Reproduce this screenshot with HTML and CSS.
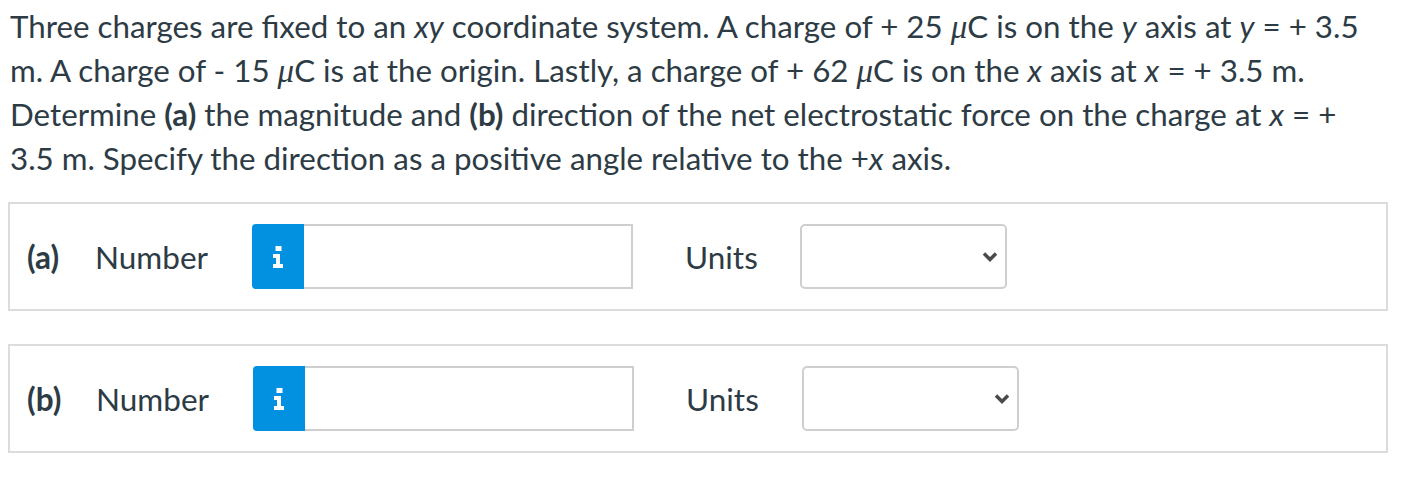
FILE: index.html
```html
<!DOCTYPE html>
<html lang="en">
<head>
<meta charset="utf-8">
<link rel="stylesheet" href="styles.css">
</head>
<body>
<div class="question">
  <p class="prompt">Three charges are fixed to an <i>xy</i> coordinate system. A charge of + 25 <span class="mu">μ</span>C is on the <i>y</i> axis at <i>y</i> = + 3.5 m. A charge of - 15 <span class="mu">μ</span>C is at the origin. Lastly, a charge of + 62 <span class="mu">μ</span>C is on the <i>x</i> axis at <i>x</i> = + 3.5 m. Determine <b>(a)</b> the magnitude and <b>(b)</b> direction of the net electrostatic force on the charge at <i>x</i> = + 3.5 m. Specify the direction as a positive angle relative to the +<i>x</i> axis.</p>

  <div class="part">
    <span class="part-label">(a)</span>
    <span class="field-label">Number</span>
    <div class="input-group">
      <span class="info-btn"><svg width="10" height="22" viewBox="0 0 10 22"><rect x="2.5" y="0" width="6" height="5" fill="#fff"/><path d="M0 8h7v10h3v4H0v-4h3v-6H0z" fill="#fff"/></svg></span>
      <span class="num-input"></span>
    </div>
    <span class="units-label">Units</span>
    <span class="select"><svg class="chev" width="16" height="11" viewBox="0 0 16 11"><path d="M2 2.5 8 8.5 14 2.5" fill="none" stroke="#4a4a4a" stroke-width="3.5"/></svg></span>
  </div>

  <div class="part part-b">
    <span class="part-label">(b)</span>
    <span class="field-label">Number</span>
    <div class="input-group">
      <span class="info-btn"><svg width="10" height="22" viewBox="0 0 10 22"><rect x="2.5" y="0" width="6" height="5" fill="#fff"/><path d="M0 8h7v10h3v4H0v-4h3v-6H0z" fill="#fff"/></svg></span>
      <span class="num-input"></span>
    </div>
    <span class="units-label">Units</span>
    <span class="select"><svg class="chev" width="16" height="11" viewBox="0 0 16 11"><path d="M2 2.5 8 8.5 14 2.5" fill="none" stroke="#4a4a4a" stroke-width="3.5"/></svg></span>
  </div>
</div>
</body>
</html>
```
FILE: styles.css
```css
html, body {
  margin: 0;
  padding: 0;
  background: #fff;
}
body {
  padding: 0 8px;
  font-family: Lato, "Liberation Sans", sans-serif;
  color: #2d3b45;
}
.question {
  width: 1380px;
}
.prompt {
  margin: 0 0 22px;
  padding: 4px 0 0 2px;
  font-size: 31.3px;
  line-height: 44px;
}
.prompt i {
  font-style: italic;
}
.mu {
  font-family: "Liberation Serif", serif;
  font-style: italic;
  font-size: 33px;
  line-height: 0;
}
.part {
  display: flex;
  align-items: center;
  border: 2px solid #dcdcdc;
  padding: 20px 17px;
  font-size: 31.5px;
  line-height: 40px;
  margin-bottom: 33px;
}
.part-label {
  font-weight: bold;
  width: 68px;
}
.field-label {
  width: 157px;
}
.input-group {
  display: flex;
  width: 381px;
  height: 65px;
}
.info-btn {
  width: 52px;
  background: #0290e0;
  border-radius: 4px 0 0 4px;
  display: flex;
  align-items: center;
  justify-content: center;
}
.num-input {
  flex: 1;
  border: 2px solid #cfcfcf;
  border-left: none;
}
.units-label {
  margin-left: 52px;
  width: 115px;
}
.select {
  width: 207px;
  height: 65px;
  box-sizing: border-box;
  border: 2px solid #cfcfcf;
  border-radius: 5px;
  display: flex;
  align-items: center;
  justify-content: flex-end;
  padding-right: 7px;
}
.part-b .part-label { width: 69px; }
.part-b .units-label { width: 116px; }
.part-b .select { width: 217px; }
```
